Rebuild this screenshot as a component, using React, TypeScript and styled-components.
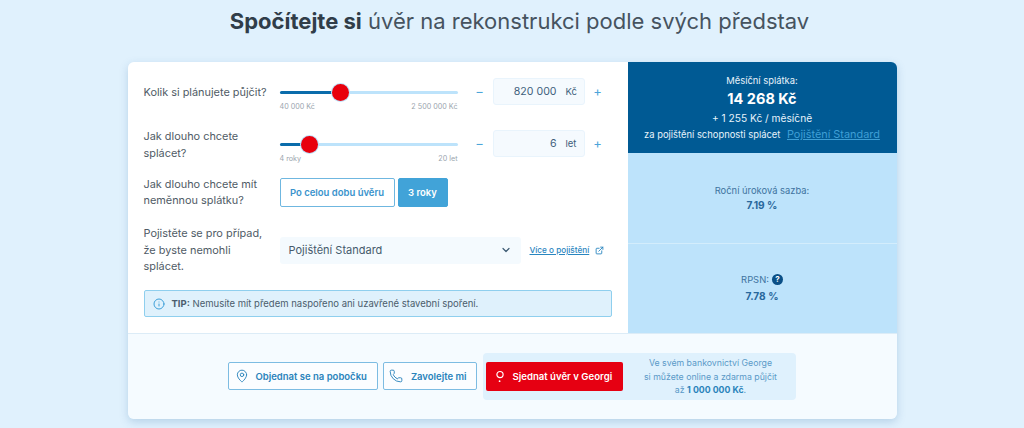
import React from 'react';
import styled, { createGlobalStyle } from 'styled-components';
import { ExternalLink, Info, MapPin, Phone, ChevronDown } from 'lucide-react';

const GlobalStyle = createGlobalStyle`
  html, body {
    margin: 0;
    padding: 0;
    background: #e0f1fd;
    font-family: Inter, "Liberation Sans", sans-serif;
    overflow: hidden;
  }
`;

const App = () => {
  return (
    <Page>
      <GlobalStyle />
      <Heading>
        <strong>Spočítejte si</strong> úvěr na rekonstrukci podle svých představ
      </Heading>
      <Card>
        <TopPart>
          <Form>
            <SliderRow>
              <Label>Kolik si plánujete půjčit?</Label>
              <Slider percent={34.5} min="40 000 Kč" max="2 500 000 Kč" />
              <Stepper value="820 000" unit="Kč" />
            </SliderRow>
            <SliderRow $second>
              <Label>
                Jak dlouho chcete
                <br />
                splácet?
              </Label>
              <Slider percent={17} min="4 roky" max="20 let" />
              <Stepper value="6" unit="let" />
            </SliderRow>
            <ChoiceRow>
              <Label>
                Jak dlouho chcete mít
                <br />
                neměnnou splátku?
              </Label>
              <Choices>
                <Choice>Po celou dobu úvěru</Choice>
                <Choice $active>3 roky</Choice>
              </Choices>
            </ChoiceRow>
            <InsuranceRow>
              <Label>
                Pojistěte se pro případ,
                <br />
                že byste nemohli
                <br />
                splácet.
              </Label>
              <SelectBox>
                Pojištění Standard
                <ChevronDown size={12} strokeWidth={2.4} color="#3d5a73" />
              </SelectBox>
              <MoreLink>
                <span>Více o pojištění</span>
                <ExternalLink size={9} strokeWidth={2.4} />
              </MoreLink>
            </InsuranceRow>
            <Tip>
              <Info size={12} color="#3d9fd8" strokeWidth={2} />
              <span>
                <b>TIP:</b> Nemusíte mít předem naspořeno ani uzavřené stavební spoření.
              </span>
            </Tip>
          </Form>
          <Results>
            <Payment>
              <PaymentLabel>Měsíční splátka:</PaymentLabel>
              <PaymentValue>14 268 Kč</PaymentValue>
              <PaymentExtra>+ 1 255 Kč / měsíčně</PaymentExtra>
              <PaymentNote>
                za pojištění schopnosti splácet <PaymentLink>Pojištění Standard</PaymentLink>
              </PaymentNote>
            </Payment>
            <Rate>
              <RateLabel>Roční úroková sazba:</RateLabel>
              <RateValue $tight>7.19 %</RateValue>
            </Rate>
            <Rate $last>
              <RateLabel>
                RPSN: <Help>?</Help>
              </RateLabel>
              <RateValue>7.78 %</RateValue>
            </Rate>
          </Results>
        </TopPart>
        <Footer>
          <OutlineButton>
            <MapPin size={14} strokeWidth={1.6} />
            Objednat se na pobočku
          </OutlineButton>
          <OutlineButton $narrow>
            <Phone size={14} strokeWidth={1.6} />
            Zavolejte mi
          </OutlineButton>
          <GeorgeBox>
            <RedButton>
              <GeorgeIcon width="10" height="14" viewBox="0 0 10 14" fill="none">
                <circle cx="5" cy="4.6" r="3.1" stroke="#fff" strokeWidth="1.2" />
                <circle cx="4.6" cy="11.2" r="0.9" fill="#fff" />
              </GeorgeIcon>
              Sjednat úvěr v Georgi
            </RedButton>
            <GeorgeText>
              Ve svém bankovnictví George
              <br />
              si můžete online a zdarma půjčit
              <br />
              až <b>1 000 000 Kč</b>.
            </GeorgeText>
          </GeorgeBox>
        </Footer>
      </Card>
    </Page>
  );
};

const Slider = ({ percent, min, max }: { percent: number; min: string; max: string }) => (
  <SliderWrap>
    <Track>
      <TrackFill style={{ width: `${percent}%` }} />
      <Thumb style={{ left: `${percent}%` }} />
    </Track>
    <Limits>
      <span>{min}</span>
      <span>{max}</span>
    </Limits>
  </SliderWrap>
);

const Stepper = ({ value, unit }: { value: string; unit: string }) => (
  <StepperWrap>
    <StepSign>−</StepSign>
    <ValueBox>
      <strong>{value}</strong>
      <em>{unit}</em>
    </ValueBox>
    <StepSign>+</StepSign>
  </StepperWrap>
);

export default App;

const Page = styled.div`
  width: 1024px;
  height: 428px;
  display: flex;
  flex-direction: column;
  align-items: center;
  overflow: hidden;
`;

const Heading = styled.h1`
  margin: 0;
  height: 62px;
  padding: 6px 0 0 15px;
  box-sizing: border-box;
  font-size: 22px;
  line-height: 30px;
  font-weight: 400;
  color: #46535f;

  strong {
    font-weight: 700;
    color: #303d49;
  }
`;

const Card = styled.div`
  width: 769px;
  height: 357px;
  display: flex;
  flex-direction: column;
  border-radius: 6px;
  overflow: hidden;
  box-shadow: 0 3px 8px rgba(60, 120, 170, 0.25);
`;

const TopPart = styled.div`
  height: 271px;
  display: flex;
`;

const Form = styled.div`
  width: 500px;
  box-sizing: border-box;
  padding: 0 16px;
  background: #fff;
  display: flex;
  flex-direction: column;
`;

const Label = styled.div`
  width: 136px;
  flex-shrink: 0;
  font-size: 10.9px;
  line-height: 16.5px;
  color: #4f5b66;
`;

const SliderRow = styled.div<{ $second?: boolean }>`
  display: flex;
  align-items: flex-start;
  height: ${(props) => (props.$second ? '59px' : '49px')};
  padding-top: 16px;
  box-sizing: border-box;
  margin-top: ${(props) => (props.$second ? '3px' : '0')};

  ${Label} {
    margin-top: ${(props) => (props.$second ? '-2px' : '6px')};
  }
`;

const SliderWrap = styled.div`
  width: 178px;
  flex-shrink: 0;
  padding-top: 13px;
`;

const Track = styled.div`
  position: relative;
  height: 3px;
  border-radius: 2px;
  background: #bde3fb;
`;

const TrackFill = styled.div`
  height: 100%;
  border-radius: 2px;
  background: #0b6cab;
`;

const Thumb = styled.div`
  position: absolute;
  top: -7px;
  width: 17px;
  height: 17px;
  margin-left: -9px;
  border-radius: 50%;
  background: #e8000d;
  box-shadow: 0 0 0 1px #bde3fb;
`;

const Limits = styled.div`
  display: flex;
  justify-content: space-between;
  margin-top: 8px;
  font-size: 7.2px;
  line-height: 10px;
  color: #9aa5ae;
`;

const StepperWrap = styled.div`
  display: flex;
  align-items: center;
  margin-left: 14px;
  height: 27px;
`;

const StepSign = styled.span`
  width: 14px;
  margin-top: -2px;
  text-align: center;
  font-size: 13px;
  color: #4da5da;

  &:first-child {
    margin-left: 1px;
    margin-right: -1px;
  }

  &:last-child {
    margin-left: 6px;
  }
`;

const ValueBox = styled.div`
  width: 92px;
  height: 27px;
  margin-left: 7px;
  box-sizing: border-box;
  padding-right: 6px;
  display: flex;
  align-items: center;
  justify-content: flex-end;
  background: #f5fafe;
  border: 1px solid #e9f4fc;
  border-radius: 3px;
  color: #3e5f7c;

  strong {
    font-weight: 400;
    font-size: 10.6px;
  }

  em {
    width: 12px;
    margin-left: 9px;
    font-style: normal;
    font-size: 9.5px;
    text-align: left;
  }
`;

const ChoiceRow = styled.div`
  display: flex;
  align-items: center;
  height: 32px;
  margin-top: 1px;
  margin-bottom: 17px;
  padding-top: 2px;
`;

const Choices = styled.div`
  display: flex;
  gap: 3px;
`;

const Choice = styled.button<{ $active?: boolean }>`
  width: ${(props) => (props.$active ? '50px' : '115px')};
  height: 29px;
  padding: 0;
  box-sizing: border-box;
  font-family: inherit;
  font-size: 9.5px;
  font-weight: 600;
  border-radius: 2px;
  border: 1px solid ${(props) => (props.$active ? '#41a3d8' : '#6fb7e0')};
  background: ${(props) => (props.$active ? '#41a3d8' : '#fff')};
  color: ${(props) => (props.$active ? '#fff' : '#3a93cc')};
`;

const InsuranceRow = styled.div`
  display: flex;
  align-items: center;
  height: 50px;
`;

const SelectBox = styled.div`
  width: 241px;
  height: 27px;
  box-sizing: border-box;
  padding: 0 9px;
  display: flex;
  align-items: center;
  justify-content: space-between;
  background: #f4fafe;
  border-radius: 3px;
  font-size: 11px;
  color: #465a6c;
`;

const MoreLink = styled.a`
  display: flex;
  align-items: center;
  gap: 6px;
  margin-left: 9px;
  font-size: 8.2px;
  font-weight: 500;
  color: #2a86bf;

  span {
    text-decoration: underline;
  }
`;

const Tip = styled.div`
  height: 27px;
  margin-top: 15px;
  box-sizing: border-box;
  padding: 0 8px;
  display: flex;
  align-items: center;
  gap: 7px;
  background: #dff1fc;
  border: 1px solid #8fcfee;
  border-radius: 2px;
  font-size: 9.5px;
  color: #4b5d6c;

  b {
    font-weight: 700;
  }
`;

const Results = styled.div`
  flex: 1;
  display: flex;
  flex-direction: column;
  background: #bde3fb;
`;

const Payment = styled.div`
  height: 91px;
  box-sizing: border-box;
  padding-top: 13px;
  background: #005a94;
  color: #e8f3fb;
  display: flex;
  flex-direction: column;
  align-items: center;
`;

const PaymentLabel = styled.div`
  font-size: 9.4px;
  line-height: 12px;
`;

const PaymentValue = styled.div`
  margin-top: 3px;
  font-size: 14.5px;
  line-height: 18px;
  font-weight: 700;
  color: #fff;
`;

const PaymentExtra = styled.div`
  margin-top: 4px;
  font-size: 10.2px;
  line-height: 13px;
`;

const PaymentNote = styled.div`
  margin-top: 3px;
  font-size: 9.4px;
  line-height: 13px;
  white-space: nowrap;
`;

const PaymentLink = styled.a`
  margin-left: 4px;
  font-size: 10.9px;
  color: #3f9fd6;
  text-decoration: underline;
`;

const Rate = styled.div<{ $last?: boolean }>`
  height: 90px;
  box-sizing: border-box;
  padding-top: ${(props) => (props.$last ? '29px' : '31px')};
  border-top: ${(props) => (props.$last ? '1px solid #d3edfc' : 'none')};
  text-align: center;
  color: #3f74a0;
`;

const RateLabel = styled.div`
  font-size: 9.4px;
  line-height: 13px;
  display: flex;
  align-items: center;
  justify-content: center;
  gap: 3px;
`;

const Help = styled.span`
  width: 11px;
  height: 11px;
  border-radius: 50%;
  background: #0a4f86;
  color: #fff;
  font-size: 8px;
  font-weight: 700;
  line-height: 11px;
  text-align: center;
`;

const RateValue = styled.div<{ $tight?: boolean }>`
  margin-top: ${(props) => (props.$tight ? '1px' : '3px')};
  font-size: 10.2px;
  line-height: 14px;
  font-weight: 700;
  color: #29689c;
`;

const Footer = styled.div`
  flex: 1;
  display: flex;
  align-items: flex-start;
  justify-content: center;
  gap: 5px;
  padding-top: 19px;
  box-sizing: border-box;
  background: #f5fbff;
  border-top: 1px solid #dcecf7;
`;

const OutlineButton = styled.button<{ $narrow?: boolean }>`
  height: 28px;
  margin-top: 9px;
  padding: 0 10px 0 ${(props) => (props.$narrow ? '5px' : '6px')};
  display: flex;
  align-items: center;
  gap: ${(props) => (props.$narrow ? '8px' : '7px')};
  box-sizing: border-box;
  font-family: inherit;
  font-size: 9.5px;
  font-weight: 600;
  color: #2a83bb;
  background: #fbfdff;
  border: 1px solid #7dbce2;
  border-radius: 2px;

  svg {
    flex-shrink: 0;
  }
`;

const GeorgeBox = styled.div`
  display: flex;
  align-items: center;
  height: 47px;
  margin-left: 1px;
  padding: 0 13px 0 3px;
  background: #dff1fd;
  border-radius: 4px;
`;

const RedButton = styled.button`
  height: 29px;
  width: 137px;
  display: flex;
  align-items: center;
  gap: 7px;
  padding: 0 0 0 9px;
  box-sizing: border-box;
  font-family: inherit;
  font-size: 9.6px;
  font-weight: 600;
  color: #fff;
  background: #e60012;
  border: none;
  border-radius: 2px;
`;

const GeorgeIcon = styled.svg`
  flex-shrink: 0;
`;

const GeorgeText = styled.div`
  width: 146px;
  margin-left: 14px;
  padding-top: 2px;
  text-align: center;
  font-size: 8.75px;
  line-height: 13.5px;
  color: #5b9ac8;

  b {
    font-weight: 700;
    color: #2a83bb;
  }
`;
